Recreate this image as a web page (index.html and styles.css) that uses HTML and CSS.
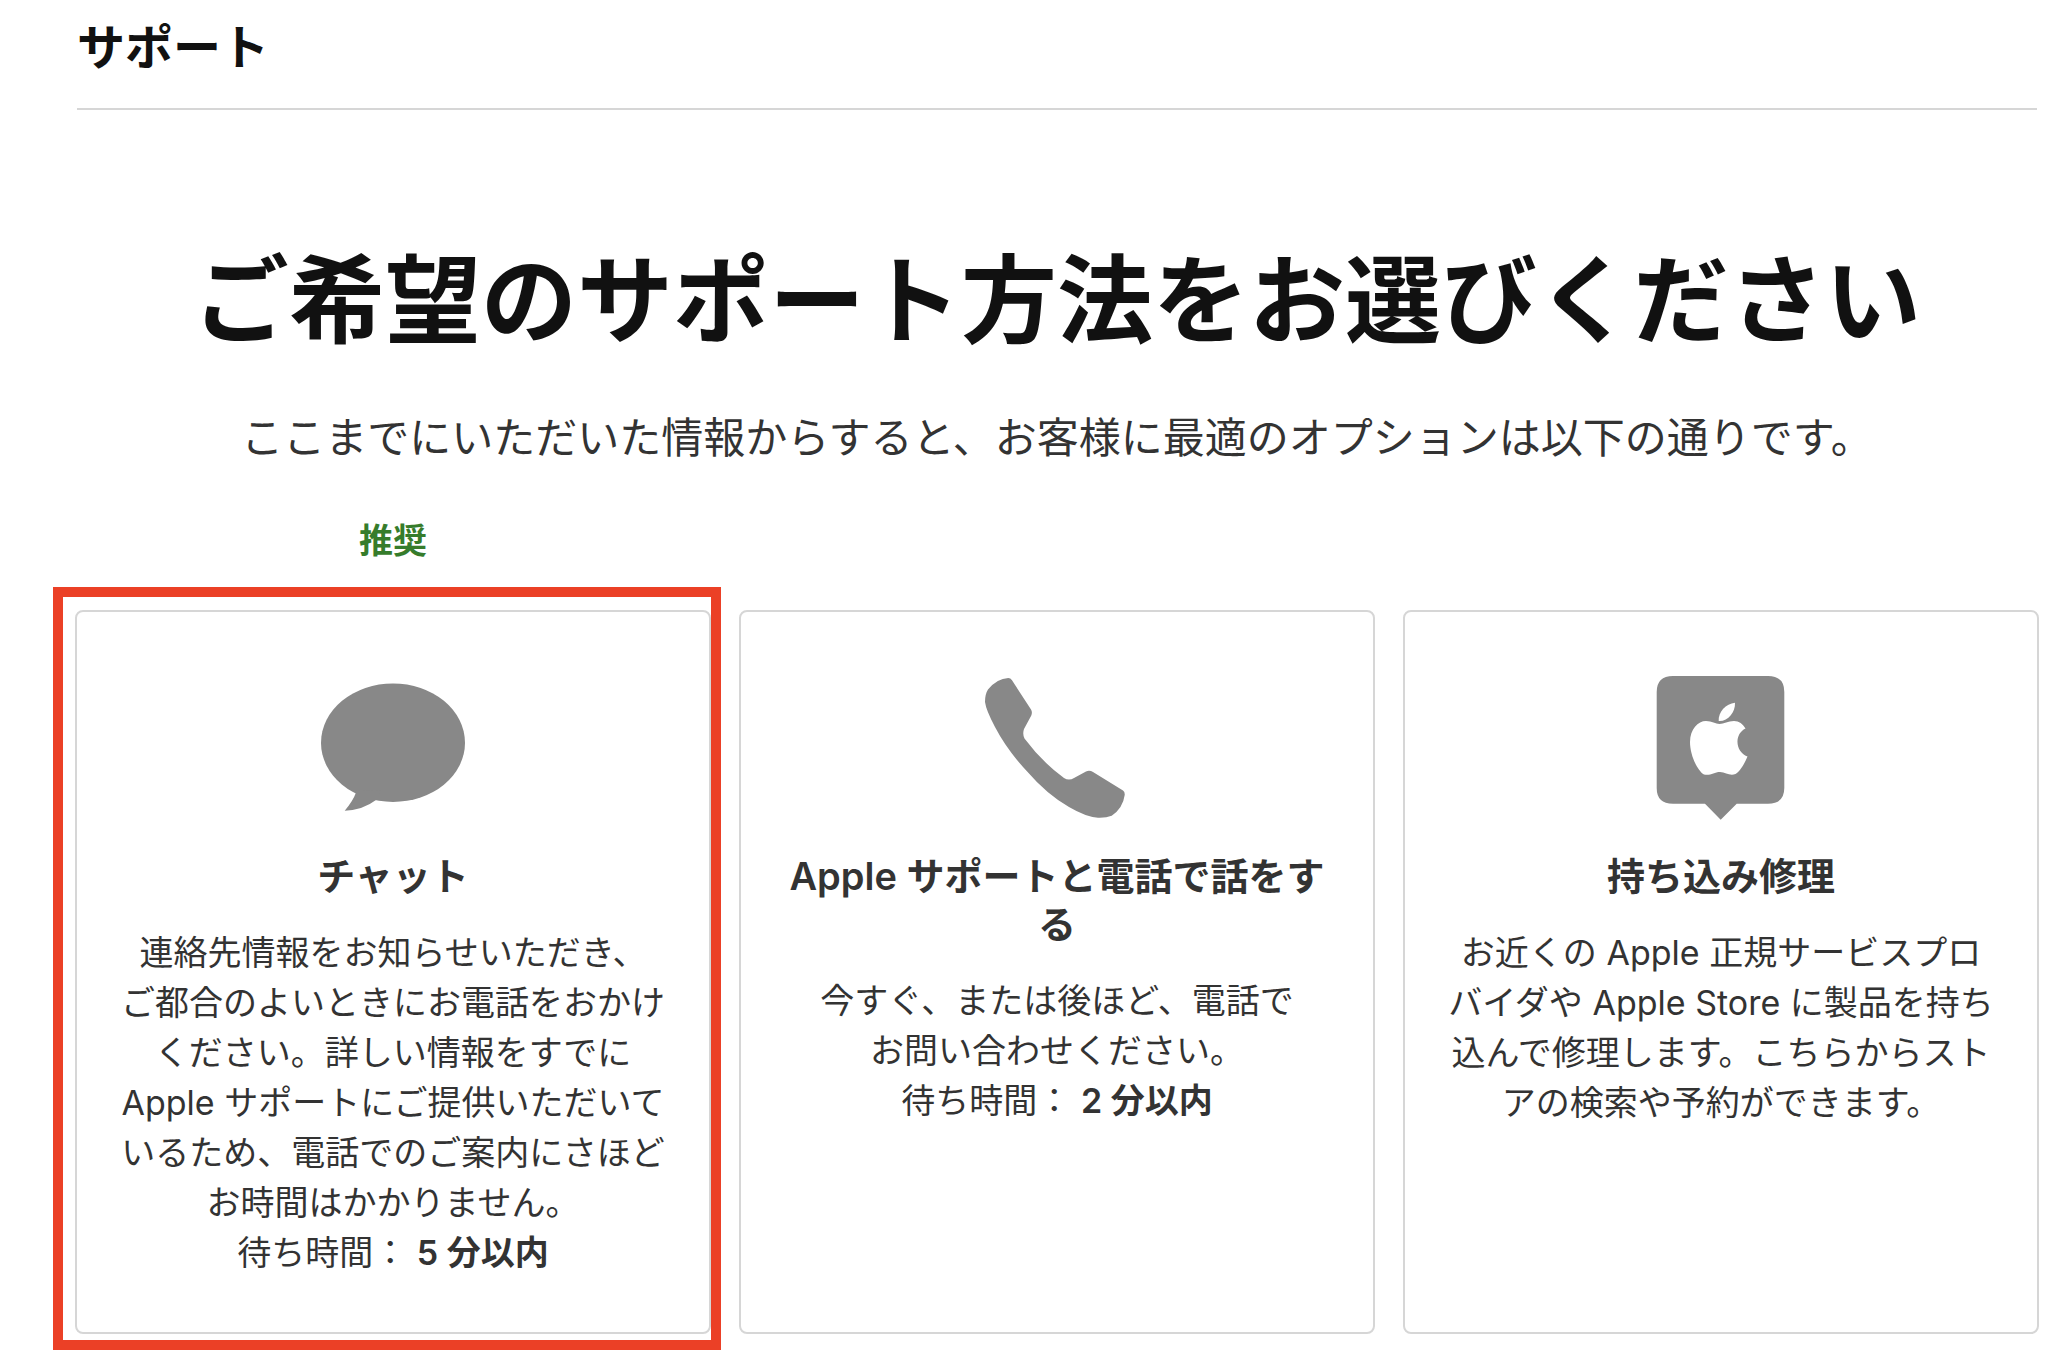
FILE: index.html
```html
<!DOCTYPE html>
<html lang="ja">
<head>
<meta charset="utf-8">
<meta name="viewport" content="width=device-width, initial-scale=1">
<title>サポート</title>
<link rel="stylesheet" href="styles.css">
</head>
<body>
<header class="site-header">
  <p class="site-title">サポート</p>
</header>
<main class="main">
  <h1 class="headline">ご希望のサポート方法をお選びください</h1>
  <p class="intro">ここまでにいただいた情報からすると、お客様に最適のオプションは以下の通りです。</p>
  <div class="options">
    <p class="badge" id="recommended">推奨</p>
    <a class="card card-highlighted" href="#chat" aria-describedby="recommended">
      <svg class="icon" viewBox="0 0 144 144" aria-hidden="true">
        <ellipse cx="72" cy="66.7" rx="72" ry="59.3"/>
        <path d="M34 114L34.7 117.3Q32 125 23.7 134.7Q42 134 55 124L60 115Z"/>
      </svg>
      <h2 class="card-title">チャット</h2>
      <p class="card-text">連絡先情報をお知らせいただき、<br>ご都合のよいときにお電話をおかけ<br>ください。詳しい情報をすでに<br>Apple サポートにご提供いただいて<br>いるため、電話でのご案内にさほど<br>お時間はかかりません。<br>待ち時間： <strong>5 分以内</strong></p>
    </a>
    <a class="card" href="#phone">
      <svg class="icon" viewBox="0 0 144 144" aria-hidden="true">
        <path d="M23.3 2Q25.5 2 27 4.3L46 33.5Q47.6 36 46.3 39.5L39 53Q37.3 58 39.5 62.5Q57 86 79 102Q84 105 89 102L101 95.5Q104.5 94 108 96L138 114.5Q140 116 139.7 119Q138 132 126.7 139.8Q121 142 113 141.7Q101 141 84 131Q62 118.5 41.7 95Q22 74 10 51Q1 34 0 26Q0 18 3 13.5Q12 2.5 23.3 2Z"/>
      </svg>
      <h2 class="card-title">Apple サポートと電話で話をする</h2>
      <p class="card-text">今すぐ、または後ほど、電話で<br>お問い合わせください。<br>待ち時間： <strong>2 分以内</strong></p>
    </a>
    <a class="card" href="#carry-in">
      <svg class="icon" viewBox="0 0 144 144" aria-hidden="true">
        <path d="M24 0H119Q135.3 0 135.3 16V112Q135.3 127.7 119 127.7H87.7L71.7 143.7L56 127.7H24Q7.7 127.7 7.7 112V16Q7.7 0 24 0Z"/>
        <path class="icon-cutout" d="M86 26.7C86.5 36 79 45.5 69.7 45C69 36 77 27.5 86 26.7Z"/>
        <path class="icon-cutout" d="M70.5 48C75 48 79 45 85 45C90 45 94 48 96.5 52.5C85 58 86 76 98.5 80.5C95.5 88 90.5 96 86.5 98C80.5 100.5 77 96 71 96C65 96 61.5 100 55 98.5C48.5 95 41 79 41 66C41 53 49 45 57 45C63 45 66.5 48 70.5 48Z"/>
      </svg>
      <h2 class="card-title">持ち込み修理</h2>
      <p class="card-text">お近くの Apple 正規サービスプロ<br>バイダや Apple Store に製品を持ち<br>込んで修理します。こちらからスト<br>アの検索や予約ができます。</p>
    </a>
  </div>
</main>
</body>
</html>
```
FILE: styles.css
```css
* {
  box-sizing: border-box;
}

body {
  margin: 0;
  background: #fff;
  color: #333;
  font-family: Inter, "Noto Sans CJK JP", sans-serif;
  font-size: 34px;
  line-height: 50px;
}

h1,
h2,
p {
  margin: 0;
}

.site-header {
  margin: 0 9px 0 77px;
  padding: 18px 0 30px;
  border-bottom: 2px solid #d6d6d6;
}

.site-title {
  color: #111;
  font-size: 48px;
  font-weight: 600;
  line-height: 60px;
}

.main {
  padding: 130px 7px 20px 75px;
  text-align: center;
}

.headline {
  color: #111;
  font-size: 96px;
  font-weight: 600;
  line-height: 120px;
}

.intro {
  margin-top: 48px;
  font-size: 42px;
  line-height: 60px;
}

.options {
  display: grid;
  grid-template-columns: repeat(3, 1fr);
  column-gap: 28px;
  margin-top: 48px;
}

.badge {
  grid-column: 1;
  margin-bottom: 44px;
  color: #367c2b;
  font-weight: 600;
}

.card {
  position: relative;
  grid-row: 2;
  padding: 64px 40px 54px;
  border: 2px solid #d6d6d6;
  border-radius: 8px;
  color: inherit;
  text-decoration: none;
}

/* Marker frame drawn over the recommended card */
.card-highlighted::after {
  content: "";
  position: absolute;
  inset: -25px -12px -18px -24px;
  border: 10px solid #eb4026;
  pointer-events: none;
}

.icon {
  display: block;
  width: 144px;
  height: 144px;
  margin: 0 auto 32px;
  fill: #888;
}

.icon-cutout {
  fill: #fff;
}

.card-title {
  margin-bottom: 28px;
  font-size: 38px;
  font-weight: 600;
  line-height: 48px;
}

.card-text strong {
  font-weight: 600;
}
```
